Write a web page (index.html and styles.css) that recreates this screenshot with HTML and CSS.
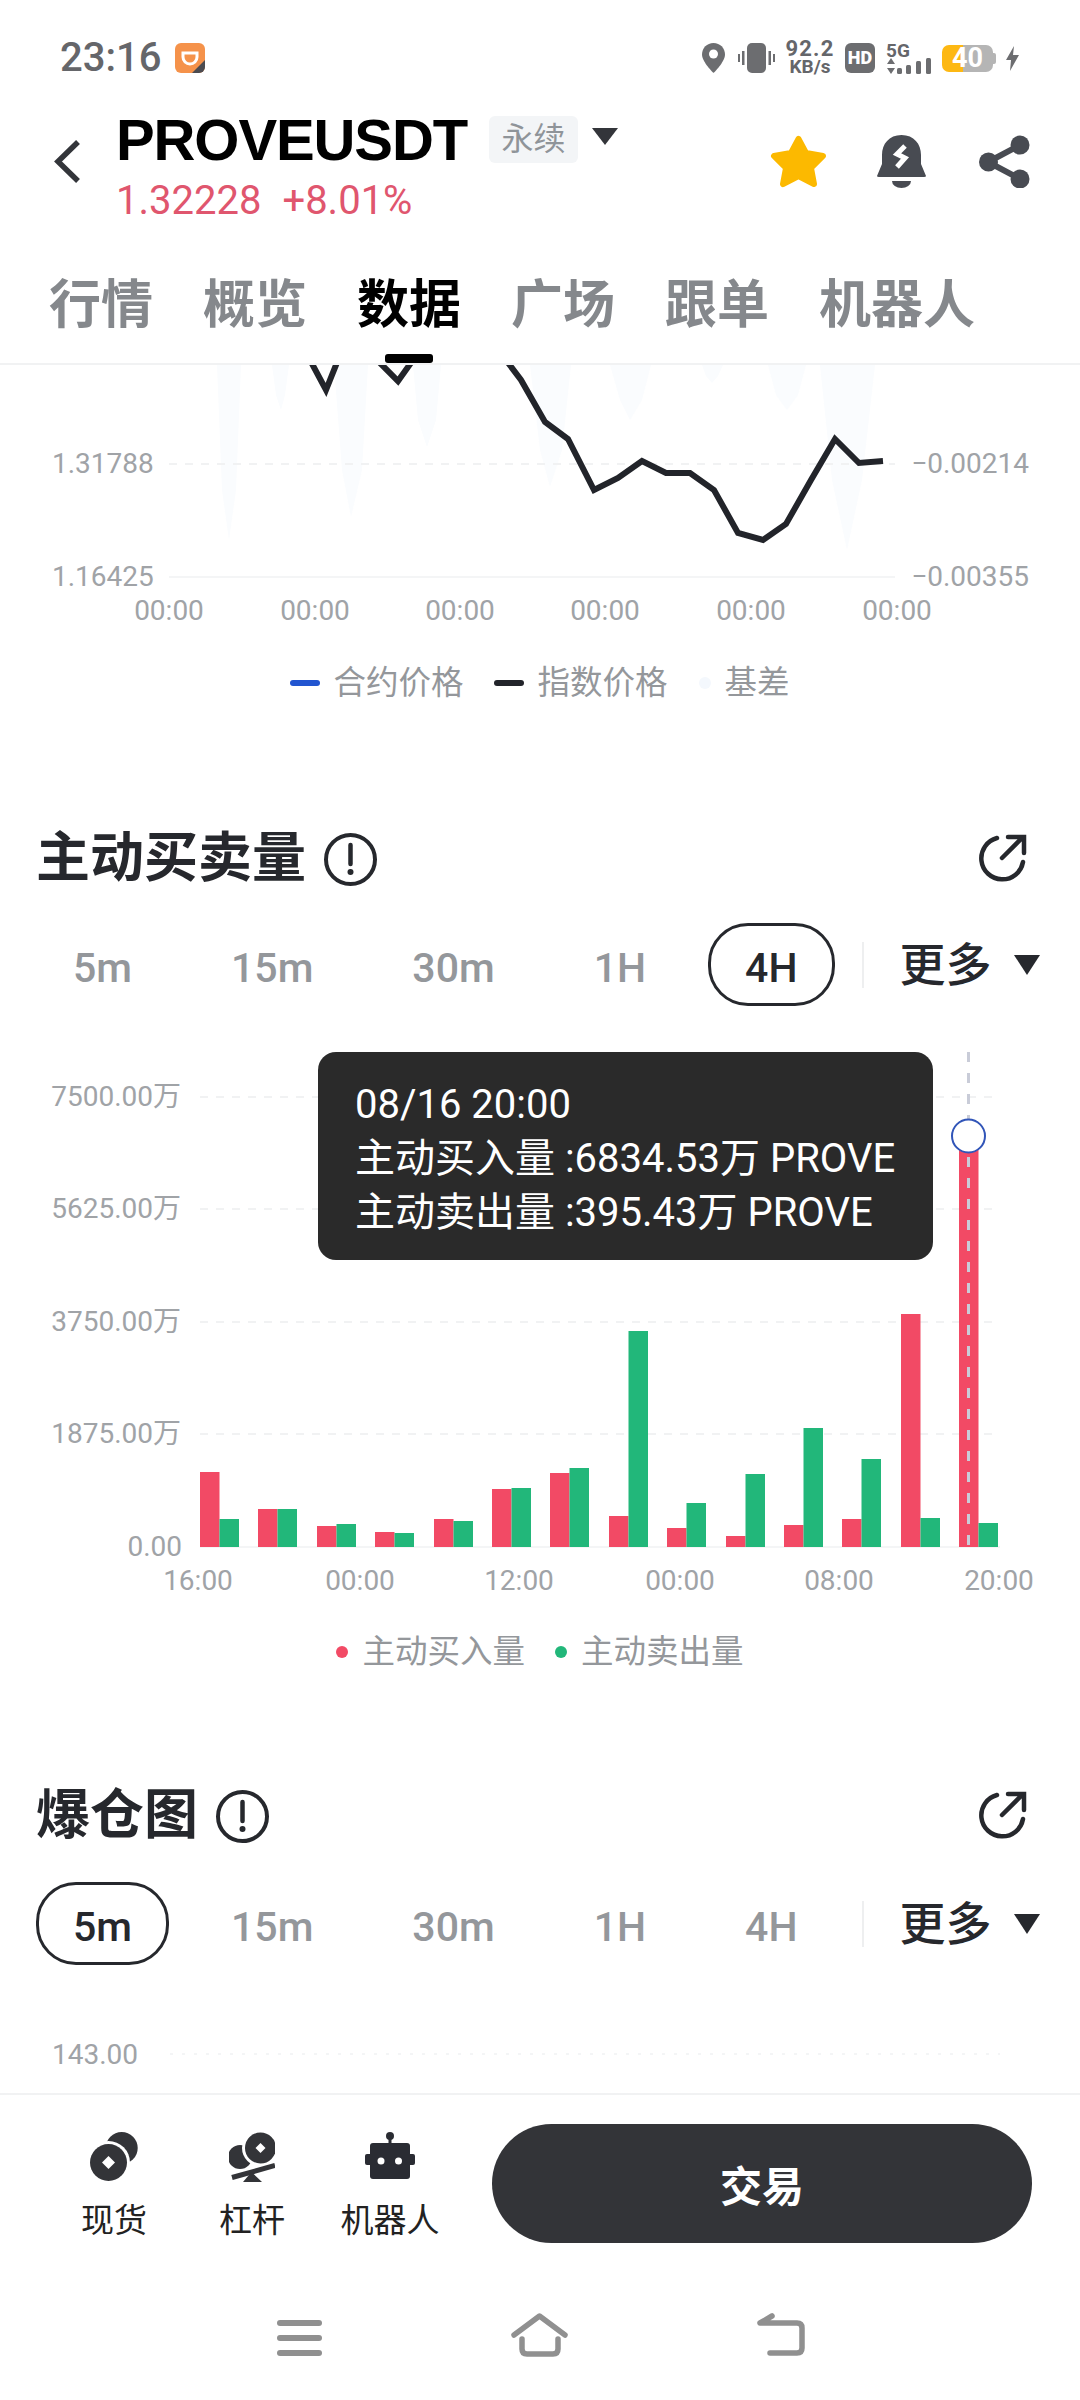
FILE: index.html
```html
<!DOCTYPE html>
<html>
<head>
    <meta charset="UTF-8">
    <meta name="viewport" content="width=device-width, initial-scale=1.0">
    <title>PROVEUSDT</title>
    <link rel="stylesheet" href="styles.css">
</head>
<body>
<div class="page">
    <!-- status bar -->
    <div class="status-bar">
        <span class="clock">23:16</span>
        <svg class="app-icon" width="30" height="30" viewBox="0 0 30 30">
            <rect width="30" height="30" rx="6" fill="#f5924a"/>
            <path d="M8 10H22V14A7 7 0 0 1 8 14Z" fill="none" stroke="#fff" stroke-width="3"/>
            <path d="M30 17V24A6 6 0 0 1 24 30H17Z" fill="#4b4b50"/>
        </svg>
        <div class="status-right">
            <svg class="pin-icon" width="23" height="30" viewBox="0 0 23 30">
                <path d="M11.5 0C5 0 0 5 0 11.5 0 19 11.5 30 11.5 30S23 19 23 11.5C23 5 18 0 11.5 0Z" fill="#6c6d70"/>
                <circle cx="11.5" cy="11" r="4.5" fill="#fff"/>
            </svg>
            <svg width="37" height="30" viewBox="0 0 37 30">
                <rect x="9" width="19" height="30" rx="5" fill="#6c6d70"/>
                <rect y="11" width="2" height="8" fill="#6c6d70"/>
                <rect x="4" y="8" width="2.5" height="14" fill="#6c6d70"/>
                <rect x="30.5" y="8" width="2.5" height="14" fill="#6c6d70"/>
                <rect x="35" y="11" width="2" height="8" fill="#6c6d70"/>
            </svg>
            <div class="net-speed">
                <span class="net-value">92.2</span>
                <span class="net-unit">KB/s</span>
            </div>
            <span class="hd-badge">HD</span>
            <div class="signal">
                <span class="signal-label">5G</span>
                <svg width="45" height="16" viewBox="0 0 45 16">
                    <path d="M5 0L9 6H1ZM1 10H9L5 16Z" fill="#6c6d70"/>
                    <rect x="11" y="10" width="5" height="6" rx="1.5" fill="#6c6d70"/>
                    <rect x="20" y="7" width="5" height="9" rx="1.5" fill="#6c6d70"/>
                    <rect x="30" y="3" width="5" height="13" rx="1.5" fill="#6c6d70"/>
                    <rect x="40" y="0" width="5" height="16" rx="1.5" fill="#6c6d70"/>
                </svg>
            </div>
            <div class="battery">40</div>
            <svg width="13" height="25" viewBox="0 0 13 25">
                <path d="M8 0L0 14H5L4 25L13 9H7Z" fill="#6c6d70"/>
            </svg>
        </div>
    </div>

    <!-- title -->
    <div class="top-bar">
        <svg class="back-icon" width="27" height="43" viewBox="0 0 27 43">
            <path d="M24 2L4 21.5L24 41" fill="none" stroke="#33353a" stroke-width="5.5"/>
        </svg>
        <div class="symbol">
            <div class="symbol-row">
                <span class="symbol-name">PROVEUSDT</span>
                <span class="symbol-tag">永续</span>
                <span class="caret caret-title"></span>
            </div>
            <div class="symbol-price">
                <span>1.32228</span>
                <span>+8.01%</span>
            </div>
        </div>
        <div class="top-actions">
            <svg width="57" height="53" viewBox="0 0 57 53">
                <path d="M28.5 4L36 18L53 21L41 33L44 49L28.5 41L13 49L16 33L4 21L21 18Z" fill="#fcb900" stroke="#fcb900" stroke-width="6" stroke-linejoin="round"/>
            </svg>
            <svg width="49" height="53" viewBox="0 0 49 53">
                <path d="M24.5 0C12 0 5 9 5 20V29L0 41Q0 42 2 42H47Q49 42 49 41L44 29V20C44 9 37 0 24.5 0Z" fill="#484b52"/>
                <path d="M15 46H34A9.5 7 0 0 1 15 46Z" fill="#484b52"/>
                <path d="M28 11L20 19L28 23L20 32" fill="none" stroke="#fff" stroke-width="5"/>
            </svg>
            <svg class="share-icon" width="51" height="53" viewBox="0 0 51 53">
                <path d="M41 10L9 27L41 44" fill="none" stroke="#484b52" stroke-width="6"/>
                <circle cx="41" cy="10" r="9.5" fill="#484b52"/>
                <circle cx="9.5" cy="27" r="9.5" fill="#484b52"/>
                <circle cx="41" cy="44" r="9.5" fill="#484b52"/>
            </svg>
        </div>
    </div>

    <!-- tabs -->
    <div class="tabs">
        <span class="tab">行情</span>
        <span class="tab">概览</span>
        <span class="tab tab-active">数据</span>
        <span class="tab">广场</span>
        <span class="tab">跟单</span>
        <span class="tab">机器人</span>
    </div>

    <div class="content">
        <!-- basis chart, scrolled partly off -->
        <svg class="chart chart-basis" width="1080" height="265" viewBox="0 365 1080 265">
            <g fill="#fafcfe">
                <polygon points="217,365 241,365 236,490 229,540 222,490"/>
                <polygon points="272,365 289,365 285,395 281,410 276,395"/>
                <polygon points="334,365 368,365 362,470 351,517 342,470"/>
                <polygon points="413,365 441,365 436,420 427,447 418,420"/>
                <polygon points="530,365 571,365 562,450 550,487 540,450"/>
                <polygon points="610,365 651,365 642,400 630,420 620,400"/>
                <polygon points="702,365 723,365 718,376 712,383 706,376"/>
                <polygon points="768,365 806,365 798,395 787,410 776,395"/>
                <polygon points="820,365 875,365 862,480 847,550 832,480"/>
            </g>
            <line class="grid-line" x1="169" y1="464" x2="895" y2="464"/>
            <line class="axis-line" x1="169" y1="577" x2="895" y2="577"/>
            <g class="price-line">
                <polyline points="310,360 326,390 338,360"/>
                <polyline points="377,360 398,381 413,360"/>
                <polyline points="506,360 521,380 545,422 568,439 594,490 618,478 642,461 666,473 690,473 714,490 738,533 763,540 786,524 811,480 835,439 859,463 883,461"/>
            </g>
            <text class="axis-label" x="52" y="473">1.31788</text>
            <text class="axis-label" x="52" y="586">1.16425</text>
            <text class="axis-label label-end" x="1029" y="473">−0.00214</text>
            <text class="axis-label label-end" x="1029" y="586">−0.00355</text>
            <g class="label-mid">
                <text class="axis-label" x="169" y="620">00:00</text>
                <text class="axis-label" x="315" y="620">00:00</text>
                <text class="axis-label" x="460" y="620">00:00</text>
                <text class="axis-label" x="605" y="620">00:00</text>
                <text class="axis-label" x="751" y="620">00:00</text>
                <text class="axis-label" x="897" y="620">00:00</text>
            </g>
        </svg>
        <div class="legend legend-basis">
            <span class="legend-item"><i class="mark-dash mark-blue"></i>合约价格</span>
            <span class="legend-item"><i class="mark-dash mark-black"></i>指数价格</span>
            <span class="legend-item"><i class="mark-dot mark-pale"></i>基差</span>
        </div>

        <!-- taker volume -->
        <div class="section-head section-volume">
            <h2>主动买卖量</h2>
            <svg class="info-icon" width="53" height="53" viewBox="0 0 53 53">
                <circle cx="26.5" cy="26.5" r="24.5" fill="none" stroke="#26282d" stroke-width="4"/>
                <path d="M26.5 12V31" stroke="#26282d" stroke-width="4.5" stroke-linecap="round"/>
                <circle cx="26.5" cy="39" r="3" fill="#26282d"/>
            </svg>
            <svg class="export-icon" width="50" height="50" viewBox="0 0 50 50">
                <path d="M19 4A21 21 0 1 0 45 28" fill="none" stroke="#26282d" stroke-width="4.5" stroke-linecap="round"/>
                <path d="M24 24L44 4M30 3H46V19" fill="none" stroke="#26282d" stroke-width="4.5" stroke-linecap="round"/>
            </svg>
        </div>
        <div class="timeframes timeframes-volume">
            <span class="tf">5m</span>
            <span class="tf">15m</span>
            <span class="tf">30m</span>
            <span class="tf">1H</span>
            <span class="tf tf-active">4H</span>
            <span class="tf-divider"></span>
            <span class="tf-more">更多</span>
            <span class="caret caret-more"></span>
        </div>
        <div class="chart-wrap">
            <svg class="chart" width="1080" height="560" viewBox="0 1040 1080 560">
                <line class="grid-line" x1="200" y1="1097" x2="1000" y2="1097"/>
                <line class="grid-line" x1="200" y1="1209" x2="1000" y2="1209"/>
                <line class="grid-line" x1="200" y1="1322" x2="1000" y2="1322"/>
                <line class="grid-line" x1="200" y1="1434" x2="1000" y2="1434"/>
                <line class="axis-line" x1="200" y1="1547" x2="1000" y2="1547"/>
                <g fill="#f24a65">
                    <rect x="200" y="1472" width="19.5" height="75"/>
                    <rect x="258" y="1509" width="19.5" height="38"/>
                    <rect x="317" y="1526" width="19.5" height="21"/>
                    <rect x="375" y="1532" width="19.5" height="15"/>
                    <rect x="434" y="1519" width="19.5" height="28"/>
                    <rect x="492" y="1489" width="19.5" height="58"/>
                    <rect x="550" y="1473" width="19.5" height="74"/>
                    <rect x="609" y="1516" width="19.5" height="31"/>
                    <rect x="667" y="1528" width="19.5" height="19"/>
                    <rect x="726" y="1536" width="19.5" height="11"/>
                    <rect x="784" y="1525" width="19.5" height="22"/>
                    <rect x="842" y="1519" width="19.5" height="28"/>
                    <rect x="901" y="1314" width="19.5" height="233"/>
                    <rect x="959" y="1136" width="19.5" height="411"/>
                </g>
                <g fill="#22b77a">
                    <rect x="219.5" y="1519" width="19.5" height="28"/>
                    <rect x="277.5" y="1509" width="19.5" height="38"/>
                    <rect x="336.5" y="1524" width="19.5" height="23"/>
                    <rect x="394.5" y="1533" width="19.5" height="14"/>
                    <rect x="453.5" y="1521" width="19.5" height="26"/>
                    <rect x="511.5" y="1488" width="19.5" height="59"/>
                    <rect x="569.5" y="1468" width="19.5" height="79"/>
                    <rect x="628.5" y="1331" width="19.5" height="216"/>
                    <rect x="686.5" y="1503" width="19.5" height="44"/>
                    <rect x="745.5" y="1474" width="19.5" height="73"/>
                    <rect x="803.5" y="1428" width="19.5" height="119"/>
                    <rect x="861.5" y="1459" width="19.5" height="88"/>
                    <rect x="920.5" y="1518" width="19.5" height="29"/>
                    <rect x="978.5" y="1523" width="19.5" height="24"/>
                </g>
                <line class="cross-line" x1="968.5" y1="1052" x2="968.5" y2="1547"/>
                <circle cx="968.5" cy="1136" r="16.5" fill="#fff" stroke="#3155b8" stroke-width="2"/>
                <g class="label-end">
                    <text class="axis-label" x="181" y="1106">7500.00万</text>
                    <text class="axis-label" x="181" y="1218">5625.00万</text>
                    <text class="axis-label" x="181" y="1331">3750.00万</text>
                    <text class="axis-label" x="181" y="1443">1875.00万</text>
                    <text class="axis-label" x="182" y="1556">0.00</text>
                </g>
                <g class="label-mid">
                    <text class="axis-label" x="198" y="1590">16:00</text>
                    <text class="axis-label" x="360" y="1590">00:00</text>
                    <text class="axis-label" x="519" y="1590">12:00</text>
                    <text class="axis-label" x="680" y="1590">00:00</text>
                    <text class="axis-label" x="839" y="1590">08:00</text>
                    <text class="axis-label" x="999" y="1590">20:00</text>
                </g>
            </svg>
            <div class="tooltip">
                <div>08/16 20:00</div>
                <div>主动买入量 :6834.53万 PROVE</div>
                <div>主动卖出量 :395.43万 PROVE</div>
            </div>
        </div>
        <div class="legend legend-volume">
            <span class="legend-item"><i class="mark-dot mark-red"></i>主动买入量</span>
            <span class="legend-item"><i class="mark-dot mark-green"></i>主动卖出量</span>
        </div>

        <!-- liquidation -->
        <div class="section-head section-liq">
            <h2>爆仓图</h2>
            <svg class="info-icon" width="53" height="53" viewBox="0 0 53 53">
                <circle cx="26.5" cy="26.5" r="24.5" fill="none" stroke="#26282d" stroke-width="4"/>
                <path d="M26.5 12V31" stroke="#26282d" stroke-width="4.5" stroke-linecap="round"/>
                <circle cx="26.5" cy="39" r="3" fill="#26282d"/>
            </svg>
            <svg class="export-icon" width="50" height="50" viewBox="0 0 50 50">
                <path d="M19 4A21 21 0 1 0 45 28" fill="none" stroke="#26282d" stroke-width="4.5" stroke-linecap="round"/>
                <path d="M24 24L44 4M30 3H46V19" fill="none" stroke="#26282d" stroke-width="4.5" stroke-linecap="round"/>
            </svg>
        </div>
        <div class="timeframes">
            <span class="tf tf-active">5m</span>
            <span class="tf">15m</span>
            <span class="tf">30m</span>
            <span class="tf">1H</span>
            <span class="tf">4H</span>
            <span class="tf-divider"></span>
            <span class="tf-more">更多</span>
            <span class="caret caret-more"></span>
        </div>
        <svg class="chart chart-liq" width="1080" height="94" viewBox="0 2000 1080 94">
            <line class="dot-line" x1="170" y1="2054" x2="1000" y2="2054"/>
            <text class="axis-label" x="52" y="2064">143.00</text>
        </svg>
    </div>

    <!-- bottom actions -->
    <div class="footer">
        <div class="actions">
            <div class="action">
                <svg width="48" height="50" viewBox="0 0 48 50">
                    <circle cx="31.7" cy="16" r="16" fill="#333438"/>
                    <circle cx="18.5" cy="30.5" r="21.5" fill="#fff"/>
                    <circle cx="18.5" cy="30.5" r="18.5" fill="#333438"/>
                    <path d="M18.5 24L25 30.5L18.5 37L12 30.5Z" fill="#fff"/>
                </svg>
                <span>现货</span>
            </div>
            <div class="action">
                <svg width="46" height="50" viewBox="0 0 46 50">
                    <circle cx="11" cy="25" r="12" fill="#333438"/>
                    <circle cx="31.5" cy="16" r="18.5" fill="#fff"/>
                    <circle cx="31.5" cy="16" r="15.5" fill="#333438"/>
                    <path d="M31.5 11L36.5 16L31.5 21L26.5 16Z" fill="#fff"/>
                    <path d="M1 47L46 34" stroke="#fff" stroke-width="9"/>
                    <path d="M3 45.5L46 33.5" stroke="#333438" stroke-width="5"/>
                    <path d="M22.5 40L33 50H14Z" fill="#333438"/>
                </svg>
                <span>杠杆</span>
            </div>
            <div class="action">
                <svg width="50" height="50" viewBox="0 0 50 50">
                    <circle cx="25" cy="4" r="4" fill="#2a2c33"/>
                    <rect x="23.5" y="4" width="3" height="8" fill="#2a2c33"/>
                    <rect x="5" y="11" width="40" height="36" rx="3" fill="#2a2c33"/>
                    <rect y="22" width="50" height="11" rx="2" fill="#2a2c33"/>
                    <circle cx="16" cy="29" r="3.5" fill="#fff"/>
                    <circle cx="33.5" cy="29" r="3.5" fill="#fff"/>
                </svg>
                <span>机器人</span>
            </div>
            <button class="trade-btn">交易</button>
        </div>
        <div class="nav-bar">
            <svg width="45" height="44" viewBox="0 0 45 44">
                <g stroke="#909090" stroke-width="6" stroke-linecap="round">
                    <path d="M3 10H42"/>
                    <path d="M3 25H42"/>
                    <path d="M3 40H42"/>
                </g>
            </svg>
            <svg width="57" height="44" viewBox="0 0 57 44">
                <path d="M3 22L28.5 3L54 22M11 26V36Q11 41 16 41H42Q47 41 47 36V26" fill="none" stroke="#909090" stroke-width="5.5" stroke-linecap="round" stroke-linejoin="round"/>
            </svg>
            <svg width="48" height="44" viewBox="0 0 48 44">
                <path d="M15 3L3 10H40Q45 10 45 15V35Q45 40 40 40H13" fill="none" stroke="#909090" stroke-width="5.5" stroke-linecap="round" stroke-linejoin="round"/>
            </svg>
        </div>
    </div>
</div>
</body>
</html>
```

FILE: styles.css
```css
:root {
    --ink: #26282d;
    --muted: #94979b;
    --axis: #a0a3a7;
    --rule: #f1f2f3;
    --status: #65666a;
}

* {
    box-sizing: border-box;
}

html, body {
    margin: 0;
    padding: 0;
    background: #fff;
}

body {
    font-family: Roboto, "Noto Sans CJK SC", sans-serif;
    color: var(--ink);
}

svg {
    display: block;
    flex-shrink: 0;
}

.page {
    width: 1080px;
    height: 2400px;
    display: flex;
    flex-direction: column;
    overflow: hidden;
}

/* status bar */
.status-bar {
    height: 116px;
    flex-shrink: 0;
    display: flex;
    align-items: center;
    padding: 0 61px 0 60px;
}

.clock {
    font-size: 40px;
    font-weight: 500;
    color: var(--status);
    line-height: 40px;
}

.app-icon {
    margin-left: 14px;
}

.status-right {
    margin-left: auto;
    display: flex;
    align-items: center;
    gap: 11px;
    color: var(--status);
}

.pin-icon {
    margin-right: 2px;
}

.net-speed {
    display: flex;
    flex-direction: column;
    align-items: center;
    font-weight: 700;
    width: 48px;
    margin-top: -1px;
}

.net-value {
    font-size: 22px;
    line-height: 18px;
    letter-spacing: 1.2px;
}

.net-unit {
    font-size: 19px;
    line-height: 17px;
}

.hd-badge {
    width: 30px;
    height: 30px;
    border-radius: 6px;
    background: #6c6d70;
    color: #fff;
    font-size: 18px;
    font-weight: 900;
    line-height: 30px;
    text-align: center;
}

.signal {
    width: 45px;
}

.signal-label {
    display: block;
    font-size: 19px;
    font-weight: 700;
    line-height: 15px;
}

.battery {
    position: relative;
    width: 51px;
    height: 27px;
    margin-right: 2px;
    border-radius: 7px;
    background: linear-gradient(90deg, #fdb813 21px, #b5b5b5 21px);
    color: #fff;
    font-size: 27px;
    font-weight: 700;
    line-height: 27px;
    text-align: center;
}

.battery::after {
    content: "";
    position: absolute;
    right: -3px;
    top: 8px;
    width: 3px;
    height: 11px;
    border-radius: 0 2px 2px 0;
    background: #b5b5b5;
}

/* title */
.top-bar {
    height: 116px;
    flex-shrink: 0;
    display: flex;
    align-items: flex-start;
    padding-left: 54px;
}

.back-icon {
    margin-top: 24px;
}

.symbol {
    margin-left: 35px;
}

.symbol-row {
    display: flex;
    align-items: center;
    height: 47px;
}

.symbol-name {
    font-family: "Liberation Sans", "Noto Sans CJK SC", sans-serif;
    font-size: 58px;
    font-weight: 700;
    line-height: 47px;
    letter-spacing: -1.1px;
    color: #000;
}

.symbol-tag {
    margin-left: 22px;
    width: 89px;
    height: 47px;
    border-radius: 6px;
    background: #f3f5f7;
    color: #8f9499;
    font-size: 32px;
    line-height: 47px;
    text-align: center;
}

.caret {
    width: 0;
    height: 0;
    border-style: solid;
    border-color: #33353a transparent transparent;
}

.caret-title {
    margin: -7px 0 0 14px;
    border-width: 17px 13px 0;
}

.symbol-price {
    display: flex;
    gap: 21px;
    margin-top: 18px;
    font-size: 40px;
    line-height: 40px;
    color: #e0566e;
}

.top-actions {
    margin-left: auto;
    margin-top: 19px;
    padding-right: 50px;
    display: flex;
    gap: 50px;
}

.share-icon {
    margin-left: 3px;
}

/* tabs */
.tabs {
    height: 133px;
    flex-shrink: 0;
    display: flex;
    gap: 50px;
    padding: 42px 0 0 49px;
    border-bottom: 2px solid var(--rule);
}

.tab {
    position: relative;
    height: 89px;
    font-size: 52px;
    font-weight: 700;
    line-height: 64px;
    color: #85888c;
}

.tab-active {
    color: #000;
}

.tab-active::after {
    content: "";
    position: absolute;
    left: 28px;
    bottom: 0;
    width: 48px;
    height: 9px;
    border-radius: 3px;
    background: #000;
}

/* chart area */
.content {
    flex: 1;
    min-height: 0;
    overflow: hidden;
}

.grid-line {
    stroke: var(--rule);
    stroke-width: 2;
    stroke-dasharray: 8 8;
}

.dot-line {
    stroke: #f4f5f6;
    stroke-width: 2;
    stroke-dasharray: 3 9;
}

.axis-line {
    stroke: #f4f5f6;
    stroke-width: 2;
}

.cross-line {
    stroke: #c9ccd8;
    stroke-width: 3;
    stroke-dasharray: 10 11;
}

.price-line polyline {
    fill: none;
    stroke: #22242a;
    stroke-width: 6;
}

.axis-label {
    font-family: Roboto, "Noto Sans CJK SC", sans-serif;
    font-size: 28px;
    fill: var(--axis);
}

.label-end,
.label-end text {
    text-anchor: end;
}

.label-mid text {
    text-anchor: middle;
}

.legend {
    display: flex;
    justify-content: center;
    align-items: center;
    height: 44px;
    margin-top: 30px;
    font-size: 32.5px;
    line-height: 44px;
    color: var(--muted);
}

.legend-basis {
    gap: 31px;
    margin-top: 31px;
}

.legend-volume {
    gap: 30px;
}

.legend-item {
    display: flex;
    align-items: center;
}

.mark-dash {
    width: 30px;
    height: 6px;
    border-radius: 3px;
    margin-right: 13px;
}

.mark-dot {
    width: 12px;
    height: 12px;
    border-radius: 50%;
    margin-right: 14px;
}

.mark-blue { background: #2255d0; }
.mark-black { background: #22242a; }
.mark-pale { background: #f4f8fd; }
.mark-red { background: #f24a65; }
.mark-green { background: #22b77a; }

.section-head {
    display: flex;
    align-items: center;
    height: 60px;
    padding: 0 52px 0 36px;
}

.section-volume {
    margin-top: 124px;
}

.section-liq {
    margin-top: 112px;
}

.section-head h2 {
    margin: 0;
    font-size: 54px;
    font-weight: 700;
    line-height: 60px;
}

.info-icon {
    margin-left: 18px;
}

.export-icon {
    margin-left: auto;
}

.timeframes {
    display: flex;
    align-items: center;
    gap: 25px;
    height: 83px;
    margin-top: 36px;
    padding-left: 36px;
}

.timeframes-volume {
    margin-top: 34px;
}

.tf {
    height: 83px;
    padding: 0 34px;
    border: 3px solid transparent;
    border-radius: 40px;
    font-size: 41px;
    font-weight: 500;
    line-height: 85px;
    color: var(--muted);
}

.tf-active {
    border-color: var(--ink);
    color: var(--ink);
}

.tf-divider {
    width: 2px;
    height: 46px;
    margin-left: 2px;
    background: #eeeff0;
}

.tf-more {
    margin-left: 11px;
    font-size: 46px;
    line-height: 60px;
    font-weight: 500;
}

.caret-more {
    margin-left: -3px;
    border-width: 20px 13px 0;
    border-top-color: var(--ink);
}

.chart-wrap {
    position: relative;
    margin-top: 34px;
}

.tooltip {
    position: absolute;
    left: 318px;
    top: 12px;
    width: 615px;
    height: 208px;
    padding: 26px 0 0 37px;
    border-radius: 18px;
    background: #2a2a2a;
    color: #fff;
    font-size: 40px;
    line-height: 54px;
    white-space: nowrap;
}

.chart-liq {
    margin-top: 35px;
}

/* bottom actions */
.footer {
    flex-shrink: 0;
    height: 307px;
    border-top: 2px solid var(--rule);
    background: #fff;
}

.actions {
    display: flex;
    align-items: flex-start;
    padding: 29px 0 0 45px;
}

.action {
    width: 138px;
    display: flex;
    flex-direction: column;
    align-items: center;
    padding-top: 8px;
    font-size: 33px;
    line-height: 46px;
    color: #222;
}

.action span {
    margin-top: 16px;
}

.trade-btn {
    width: 540px;
    height: 119px;
    margin-left: 33px;
    border: none;
    border-radius: 60px;
    background: #333438;
    color: #fff;
    font-family: inherit;
    font-size: 42px;
    font-weight: 700;
}

.nav-bar {
    display: flex;
    gap: 189px;
    margin-top: 69px;
    padding-left: 277px;
}
```
